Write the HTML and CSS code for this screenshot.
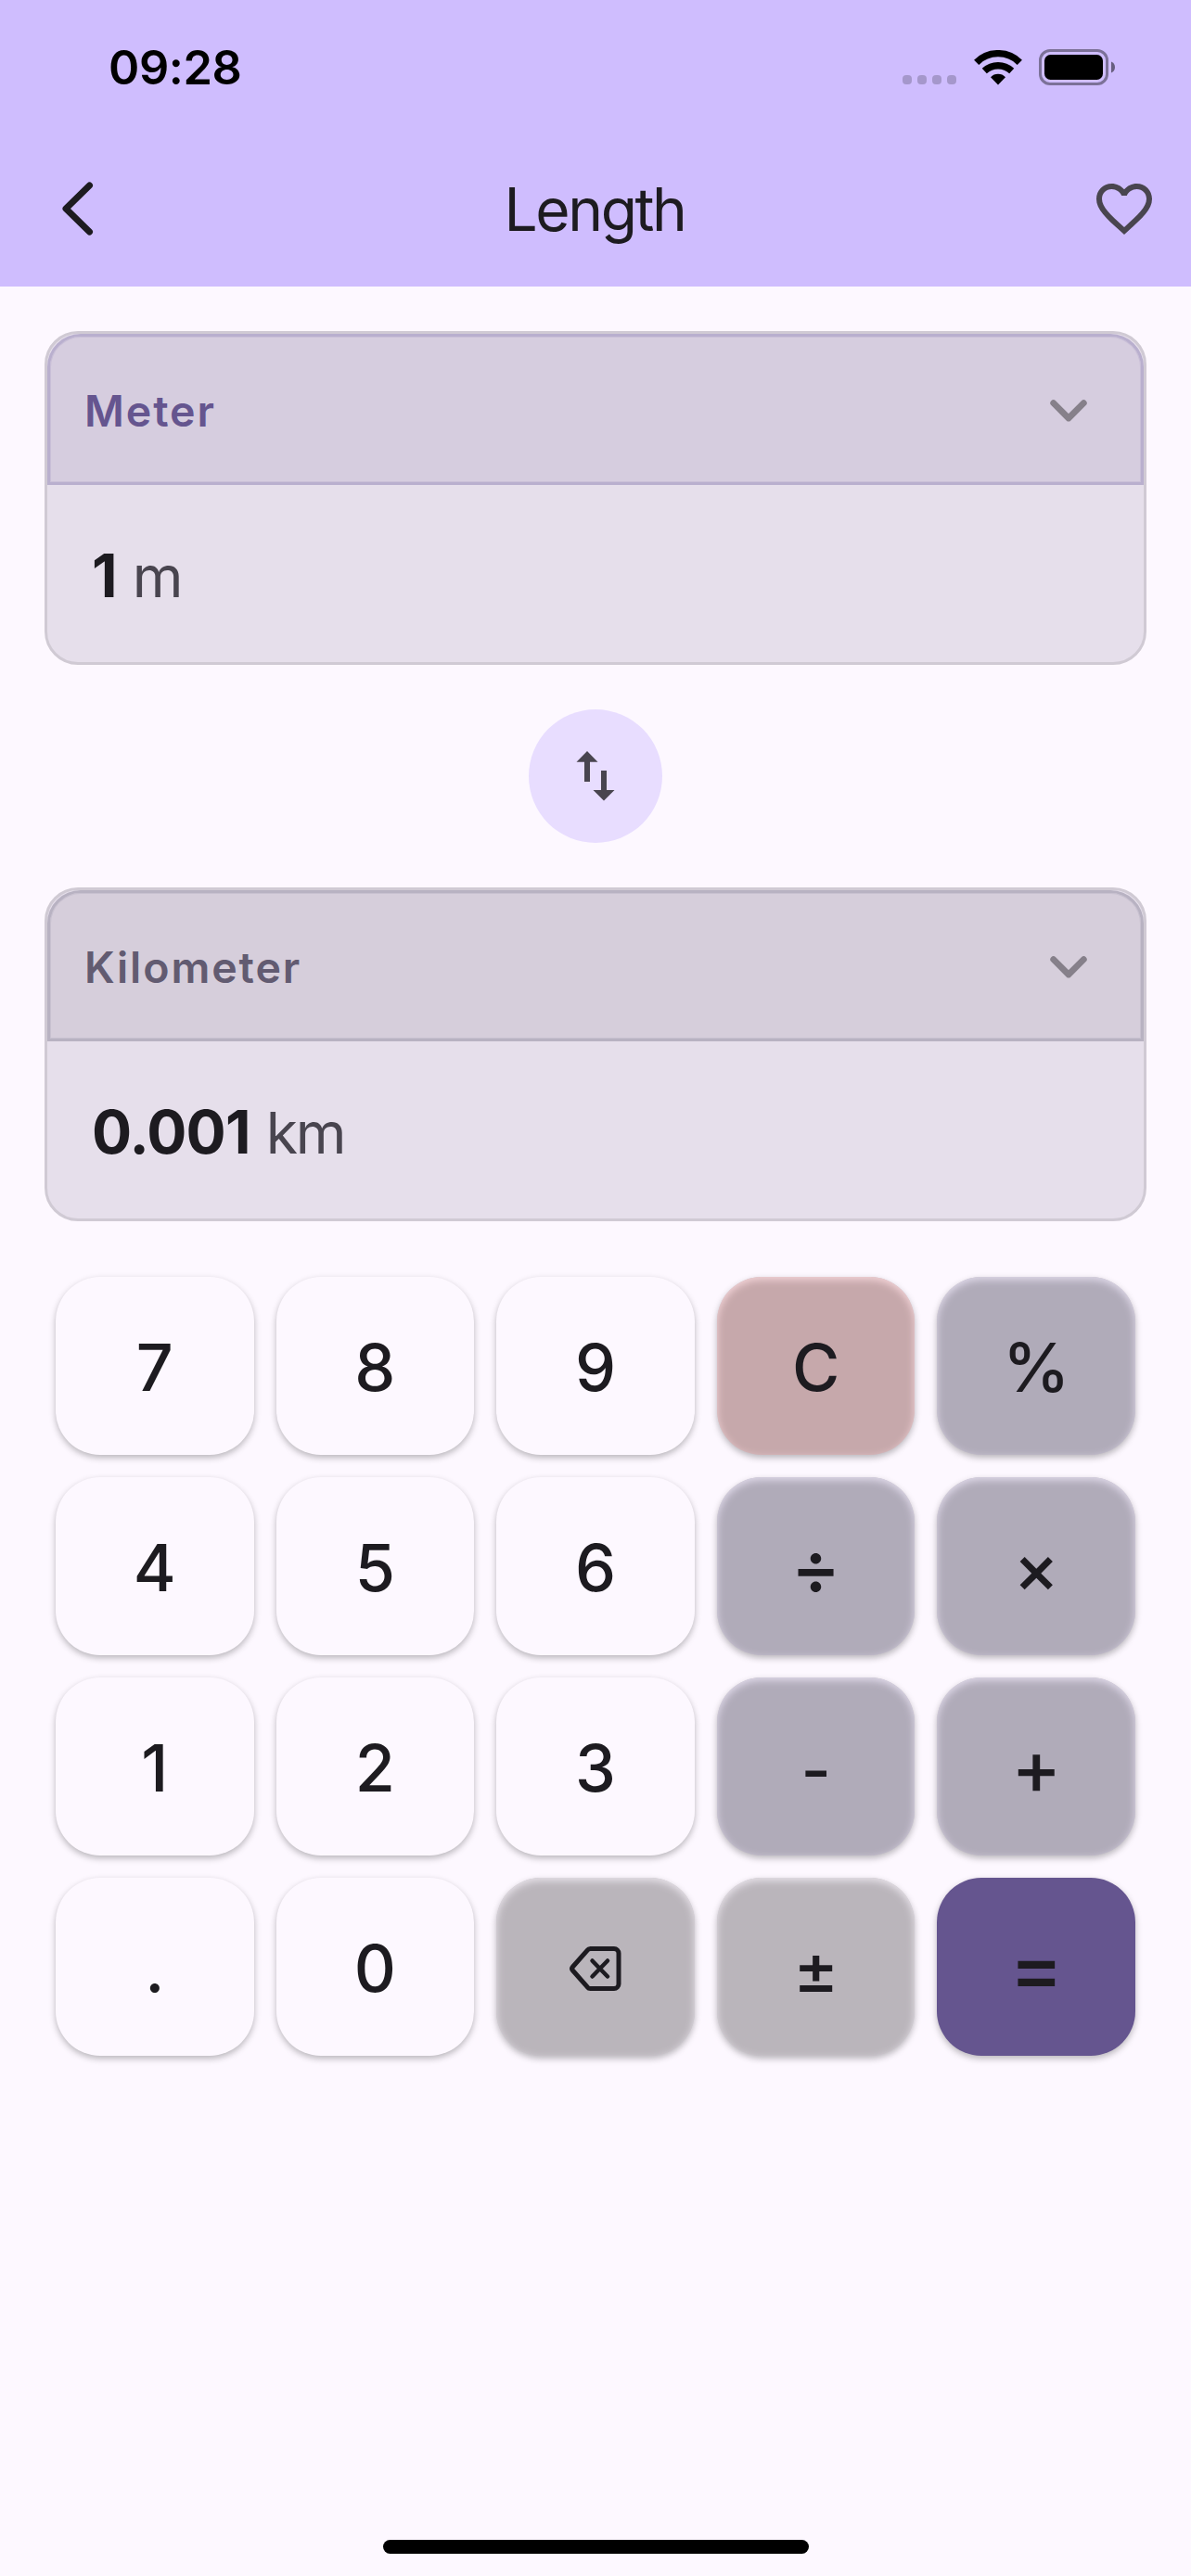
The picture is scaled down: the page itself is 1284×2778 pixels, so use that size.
FILE: index.html
```html
<!DOCTYPE html>
<html lang="en">
<head>
<meta charset="utf-8">
<title>Length</title>
<link rel="stylesheet" href="styles.css">
</head>
<body>
<div class="screen">
  <header class="header">
    <div class="status">
      <span class="time">09:28</span>
      <div class="indicators">
        <div class="signal"><i></i><i></i><i></i><i></i></div>
        <svg class="wifi" viewBox="0 0 52 38" width="52" height="38">
          <path d="M2.700 13.300a33 33 0 0 1 46.600 0" fill="none" stroke="#000" stroke-width="7.400"/>
          <path d="M11.300 22.500a21.500 21.500 0 0 1 29.400 0" fill="none" stroke="#000" stroke-width="7.400"/>
          <path d="M26 37.400L18 29.200a11.100 11.100 0 0 1 16 0z"/>
        </svg>
        <svg class="battery" viewBox="0 0 84 40" width="84" height="40">
          <rect x="1.500" y="1.500" width="72" height="36" rx="10.500" fill="none" stroke="#000" stroke-opacity=".4" stroke-width="3"/>
          <rect x="6" y="6" width="63" height="27" rx="6.500"/>
          <path d="M78 13.500c2.600 1 4 3.300 4 6s-1.400 5-4 6z" fill-opacity=".5"/>
        </svg>
      </div>
    </div>
    <div class="toolbar">
      <svg class="back" viewBox="0 0 72 72" width="72" height="72"><path d="M48.500 11L23 36l25.500 25" fill="none" stroke="#1d1b20" stroke-width="7" stroke-linecap="round" stroke-linejoin="round"/></svg>
      <h1 class="title">Length</h1>
      <svg class="heart" viewBox="0 0 24 24" width="72" height="72"><path fill="#49454f" d="M16.500 3c-1.740 0-3.410.81-4.500 2.090C10.910 3.810 9.240 3 7.500 3 4.420 3 2 5.420 2 8.500c0 3.780 3.400 6.860 8.550 11.540L12 21.350l1.450-1.320C18.600 15.360 22 12.280 22 8.500 22 5.420 19.580 3 16.500 3zm-4.400 15.550l-.1.100-.1-.1C7.140 14.240 4 11.390 4 8.500 4 6.500 5.500 5 7.500 5c1.540 0 3.040.990 3.570 2.360h1.870C13.460 5.990 14.960 5 16.500 5c2 0 3.500 1.500 3.500 3.500 0 2.890-3.140 5.740-7.900 10.050z"/></svg>
    </div>
  </header>

  <main class="content">
    <section class="card">
      <div class="unit unit-source">
        <span>Meter</span>
        <svg viewBox="0 0 40 24" width="40" height="24"><path d="M3.700 3.700L20 20L36.300 3.700" fill="none" stroke="#86808a" stroke-width="6.800" stroke-linecap="round" stroke-linejoin="round"/></svg>
      </div>
      <div class="value"><b>1</b><span>m</span></div>
    </section>

    <div class="swap">
      <svg viewBox="0 0 72 72" width="72" height="72"><path fill="#49454f" d="M27 9L15.500 20.700H24V42h6V20.700h8.500zM45 62.500L33.500 51H42V30h6v21h8.500z"/></svg>
    </div>

    <section class="card">
      <div class="unit unit-target">
        <span>Kilometer</span>
        <svg viewBox="0 0 40 24" width="40" height="24"><path d="M3.700 3.700L20 20L36.300 3.700" fill="none" stroke="#86808a" stroke-width="6.800" stroke-linecap="round" stroke-linejoin="round"/></svg>
      </div>
      <div class="value"><b>0.001</b><span>km</span></div>
    </section>

    <div class="keypad">
      <div class="key">7</div><div class="key">8</div><div class="key">9</div><div class="key clear">C</div><div class="key op percent">%</div>
      <div class="key">4</div><div class="key">5</div><div class="key">6</div><div class="key op wide">÷</div><div class="key op times">×</div>
      <div class="key">1</div><div class="key">2</div><div class="key">3</div><div class="key op minus">-</div><div class="key op wide">+</div>
      <div class="key">.</div><div class="key">0</div>
      <div class="key util">
        <svg viewBox="0 0 56 48" width="56" height="48" fill="none" stroke="#1d1b20" stroke-linecap="round" stroke-linejoin="round"><path stroke-width="5" d="M22.500 2.500H48a5 5 0 0 1 5 5V40.500a5 5 0 0 1-5 5H22.500a4 4 0 0 1-3.200-1.600L3.500 26a3 3 0 0 1 0-4L19.300 4.100a4 4 0 0 1 3.200-1.600z"/><path stroke-width="4.500" d="M24.500 15.500L41 32.500M41 15.500L24.500 32.500"/></svg>
      </div>
      <div class="key util times">±</div><div class="key equals wide">=</div>
    </div>
  </main>
  <div class="home-bar"></div>
</div>
</body>
</html>
```
FILE: styles.css
```css
* { box-sizing: border-box; }

body {
  margin: 0;
  background: #fdf8ff;
  color: #1d1b20;
  font-family: Inter, "Liberation Sans", sans-serif;
}

.screen {
  width: 1284px;
  height: 2778px;
  display: flex;
  flex-direction: column;
  overflow: hidden;
}

.header {
  height: 309px;
  background: #cfbdfe;
}

.status {
  height: 141px;
  padding: 53px 80px 0 117px;
  display: flex;
  justify-content: space-between;
}

.time {
  font-size: 50.5px;
  line-height: 40px;
  font-weight: 600;
  color: #000;
  letter-spacing: -0.4px;
}

.indicators {
  height: 40px;
  display: flex;
  align-items: flex-start;
}

.signal {
  display: flex;
  gap: 6px;
  margin: 28px 19px 0 0;
}

.signal i {
  width: 10px;
  height: 10px;
  border-radius: 4px;
  background: rgba(0, 0, 0, 0.2);
}

.wifi { margin: 1px 18px 0 0; }

.toolbar {
  height: 168px;
  padding: 0 36px 0 48px;
  display: grid;
  grid-template-columns: 72px 1fr 72px;
  align-items: center;
}

.title {
  margin: 0;
  padding: 2px 14px 0 0;
  font-size: 64px;
  line-height: 72px;
  font-weight: 380;
  letter-spacing: -2.4px;
  text-align: center;
}

.content {
  flex: 1;
  padding: 48px 48px 0;
}

.card {
  height: 360px;
  border: 3px solid #d0cad4;
  border-radius: 36px;
  background: #e6dfeb;
}

.unit {
  height: 163px;
  padding: 2px 58px 0 37px;
  border: 3px solid;
  border-radius: 36px 36px 0 0;
  display: flex;
  align-items: center;
  justify-content: space-between;
  font-size: 46.5px;
  font-weight: 580;
  letter-spacing: 1.9px;
}

.unit-source {
  color: #65558f;
  background: #d6cddf;
  border-color: #b9afce;
  box-shadow: inset 0 0 0 1px #c9bfd7;
}

.unit-target {
  color: #625b71;
  background: #d6cedb;
  border-color: #b8b2c2;
  box-shadow: inset 0 0 0 1px #c8c1d0;
}

.value {
  height: 191px;
  padding: 4px 0 0 48px;
  display: flex;
  align-items: center;
  font-size: 64px;
}

.value b {
  font-weight: 700;
  letter-spacing: -0.8px;
}

.value span {
  margin-left: 17px;
  font-size: 62.5px;
  color: #49454f;
  letter-spacing: -2.2px;
}

.swap {
  width: 144px;
  height: 144px;
  margin: 48px auto;
  border-radius: 50%;
  background: #e8ddff;
  display: flex;
  align-items: center;
  justify-content: center;
}

.keypad {
  margin: 60px 12px 0;
  display: grid;
  grid-template-columns: repeat(5, 1fr);
  grid-auto-rows: 192px;
  gap: 24px;
}

.key {
  display: flex;
  align-items: center;
  justify-content: center;
  padding-top: 3px;
  border-radius: 48px;
  font-size: 70px;
  font-weight: 500;
  box-shadow: 0 3px 7px rgba(0, 0, 0, 0.27);
}

.clear {
  background: #c6a8ab;
  box-shadow: 0 3px 7px rgba(0, 0, 0, 0.27), inset 0 3px 8px #f5d6da;
}

.op {
  background: #b0abb9;
  box-shadow: 0 3px 7px rgba(0, 0, 0, 0.27), inset 0 3px 8px #e2dcec;
}

.util {
  background: #bab5bb;
  box-shadow: 0 3px 7px rgba(0, 0, 0, 0.27), inset 0 3px 8px #eae5ec;
}

.equals { background: #65558f; }

.wide {
  font-size: 81px;
  font-weight: 450;
  padding-top: 2px;
}

.equals.wide {
  font-size: 87px;
  padding-top: 1px;
}

.times { font-size: 74px; }

.percent {
  font-size: 73px;
  font-weight: 450;
}

.minus { padding-top: 6px; }

.home-bar {
  width: 459px;
  height: 15px;
  margin: 0 auto 24px;
  border-radius: 8px;
  background: #000;
}
```
